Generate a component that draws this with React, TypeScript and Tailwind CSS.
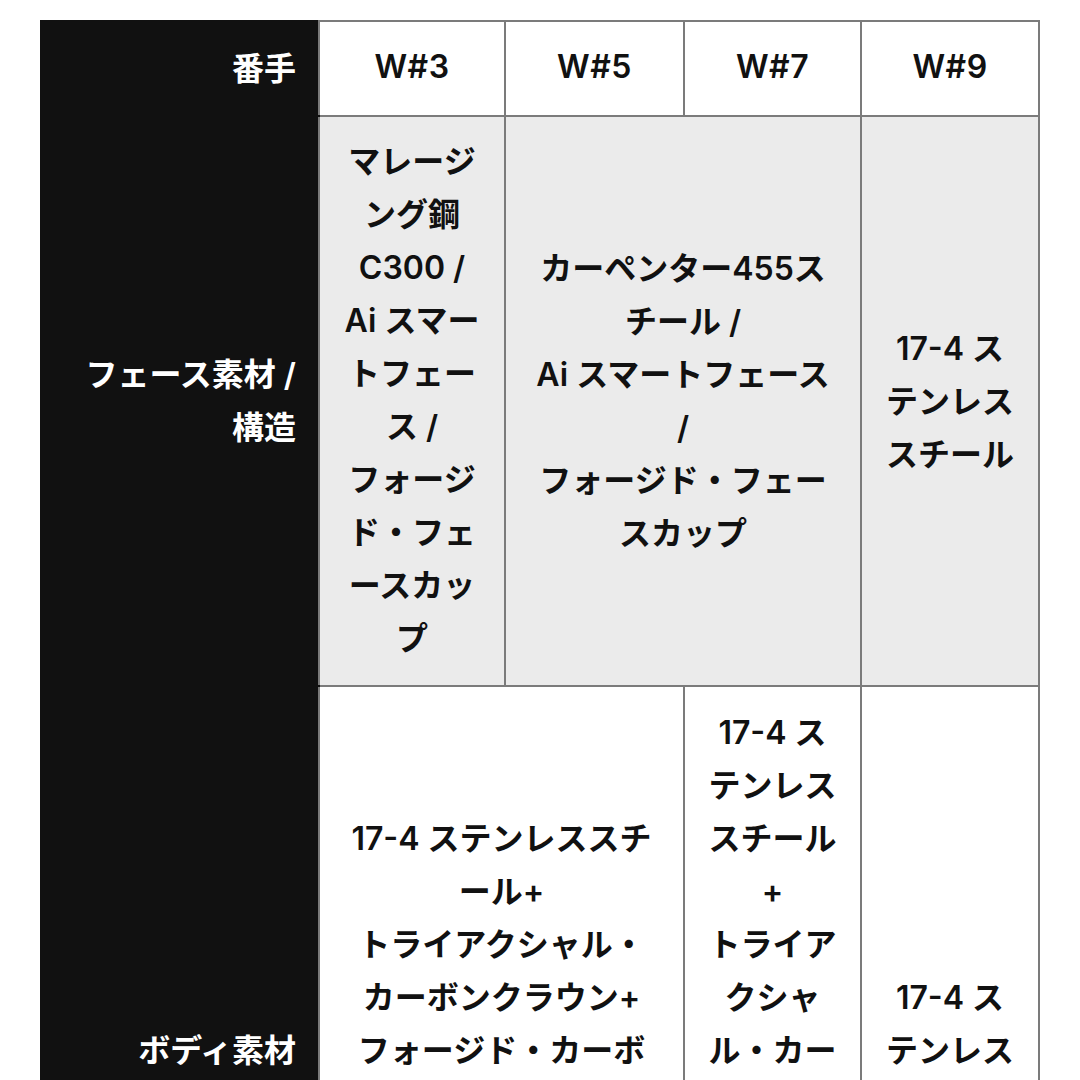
import React from "react";

type CellProps = {
  lines: string[];
  colSpan?: number;
  className?: string;
};

const Lines = ({ lines }: { lines: string[] }) => (
  <>
    {lines.map((l, i) => (
      <React.Fragment key={i}>
        {i > 0 && <br />}
        {l}
      </React.Fragment>
    ))}
  </>
);

const Head = ({ lines }: { lines: string[] }) => (
  <th className="bg-[#111111] text-white text-right align-middle pr-[22px] pl-2 border-2 border-[#111111] border-r-[#7b7b7b] font-semibold whitespace-nowrap">
    <Lines lines={lines} />
  </th>
);

const Cell = ({ lines, colSpan, className = "" }: CellProps) => (
  <td
    colSpan={colSpan}
    className={`border-2 border-[#7b7b7b] text-center align-middle font-semibold whitespace-nowrap py-[19px] ${className}`}
  >
    <Lines lines={lines} />
  </td>
);

export default function App() {
  return (
    <div
      className="w-[1080px] h-[1080px] overflow-hidden bg-white text-[#111111] pt-5 pl-10"
      style={{ fontFamily: 'Inter, "Noto Sans CJK JP", sans-serif' }}
    >
      <table className="table-fixed border-collapse w-[998px] text-[32px] leading-[53px]">
        <colgroup>
          <col className="w-[278px]" />
          <col className="w-[186px]" />
          <col className="w-[179px]" />
          <col className="w-[177px]" />
          <col className="w-[178px]" />
        </colgroup>
        <tbody>
          <tr>
            <Head lines={["番手"]} />
            <Cell lines={["W#3"]} className="!pt-[18px] !pb-[22px] font-medium tracking-[0.5px]" />
            <Cell lines={["W#5"]} className="!pt-[18px] !pb-[22px] font-medium tracking-[0.5px]" />
            <Cell lines={["W#7"]} className="!pt-[18px] !pb-[22px] font-medium tracking-[0.5px]" />
            <Cell lines={["W#9"]} className="!pt-[18px] !pb-[22px] font-medium tracking-[0.5px]" />
          </tr>
          <tr className="bg-[#ebebeb]">
            <Head lines={["フェース素材 /", "構造"]} />
            <Cell
              className="!pt-[18px] !pb-[20px]"
              lines={[
                "マレージ",
                "ング鋼",
                "C300 /",
                "Ai スマー",
                "トフェー",
                "ス /",
                "フォージ",
                "ド・フェ",
                "ースカッ",
                "プ",
              ]}
            />
            <Cell
              colSpan={2}
              lines={[
                "カーペンター455ス",
                "チール /",
                "Ai スマートフェース",
                "/",
                "フォージド・フェー",
                "スカップ",
              ]}
            />
            <Cell lines={["17-4 ス", "テンレス", "スチール"]} />
          </tr>
          <tr>
            <Head lines={["ボディ素材"]} />
            <Cell
              colSpan={2}
              lines={[
                "17-4 ステンレススチ",
                "ール+",
                "トライアクシャル・",
                "カーボンクラウン+",
                "フォージド・カーボ",
                "ンソール",
                "+",
                "タングステン・ウ",
                "ェイト",
              ]}
            />
            <Cell
              lines={[
                "17-4 ス",
                "テンレス",
                "スチール",
                "+",
                "トライア",
                "クシャ",
                "ル・カー",
                "ボンクラ",
                "ウン",
                "+",
                "フォージ",
                "ド・カー",
                "ボンソール",
              ]}
            />
            <Cell lines={["17-4 ス", "テンレス", "スチール"]} />
          </tr>
        </tbody>
      </table>
    </div>
  );
}
